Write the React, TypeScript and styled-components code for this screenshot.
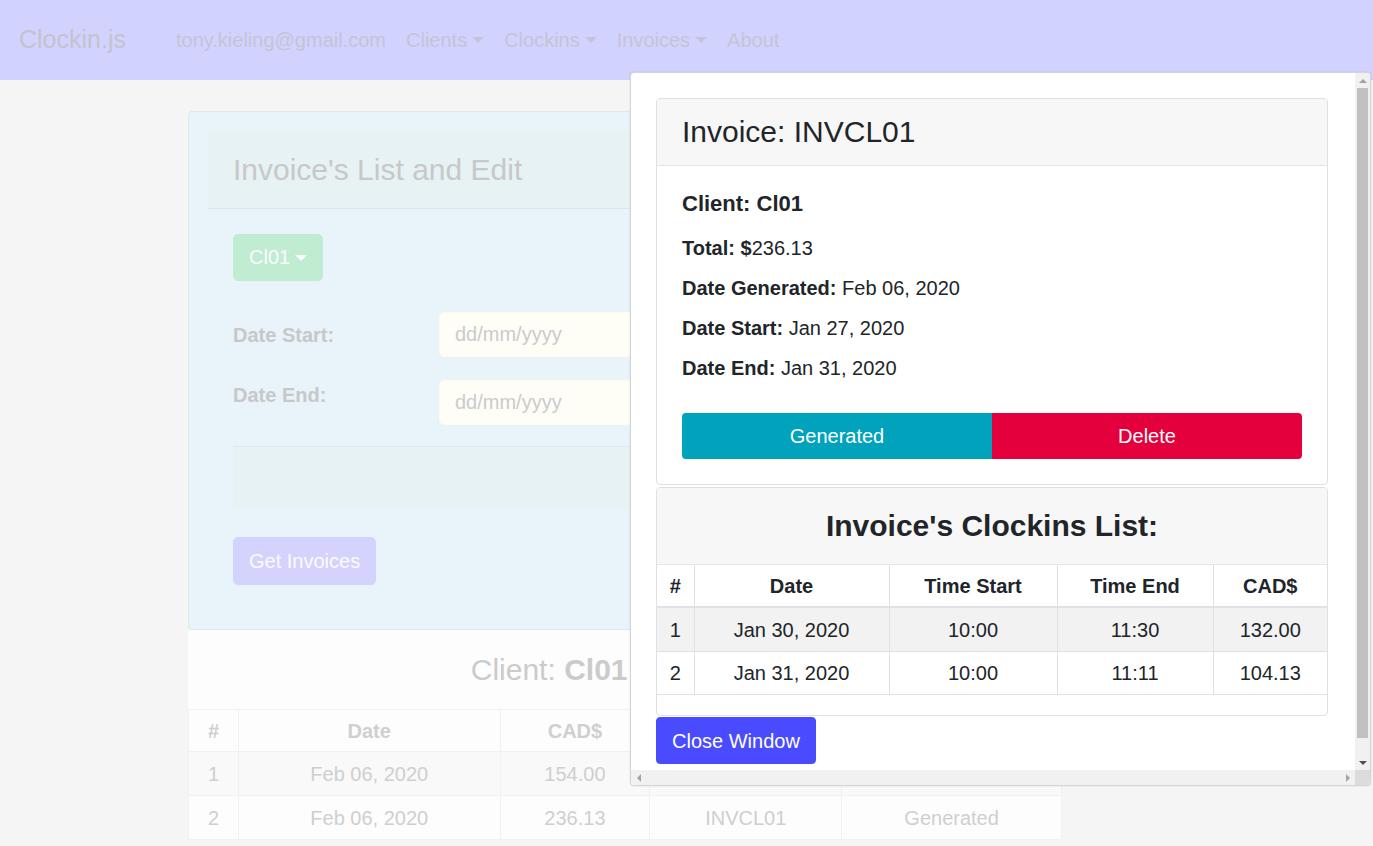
import React from "react";
import styled, { createGlobalStyle } from "styled-components";

const GlobalStyle = createGlobalStyle`
  * { box-sizing: border-box; }
  html, body { margin: 0; padding: 0; }
  body {
    background: #f5f5f5;
    font-family: "Liberation Sans", Arial, Helvetica, sans-serif;
    font-size: 20px;
    line-height: 1.5;
    color: #212529;
  }
`;

const Page = styled.div`
  position: relative;
  height: 846px;
  overflow: hidden;
`;

const Navbar = styled.nav`
  height: 80px;
  background: #d2d2fe;
  display: flex;
  align-items: center;
  padding: 0 19px;
`;

const Brand = styled.span`
  font-size: 25px;
  color: #c3c3cc;
  margin-right: 50px;
`;

const NavList = styled.div`
  display: flex;
  gap: 20px;
`;

const NavLink = styled.span`
  color: #c4c4d6;
  font-size: 20px;
  display: inline-flex;
  align-items: center;
`;

const Caret = styled.span<{ $color?: string }>`
  display: inline-block;
  margin-left: 5px;
  width: 0;
  height: 0;
  border-top: 6px solid ${(p) => p.$color || "currentColor"};
  border-left: 6px solid transparent;
  border-right: 6px solid transparent;
`;

const Main = styled.main`
  padding: 31px 0 0 188px;
`;

const Panel = styled.section`
  width: 874px;
  background: #e8f4f9;
  border: 1px solid #dde9ee;
  border-radius: 4px;
  padding: 19px 19px 19px;
`;

const PanelHeader = styled.div`
  background: #e7f2f5;
  border-bottom: 1px solid #dbe7eb;
  padding: 21px 25px 20px;
`;

const PanelTitle = styled.h3`
  margin: 0;
  font-size: 30px;
  line-height: 36px;
  font-weight: 400;
  color: #c8c8c8;
`;

const PanelBody = styled.div`
  padding: 25px 25px 25px;
`;

const FadedButton = styled.button<{ $bg: string; $h?: number }>`
  display: inline-flex;
  align-items: center;
  height: ${(p) => p.$h || 47}px;
  padding: 0 15px;
  background: ${(p) => p.$bg};
  border: 1px solid ${(p) => p.$bg};
  border-radius: 5px;
  color: #fbfbff;
  font-family: inherit;
  font-size: 20px;
`;

const FormGrid = styled.div`
  margin-top: 31px;
  display: grid;
  grid-template-columns: 206px 1fr;
  row-gap: 23px;
`;

const FormLabel = styled.label<{ $top: number }>`
  font-weight: 700;
  color: #c8c8c8;
  padding-top: ${(p) => p.$top}px;
  line-height: 30px;
`;

const DateInput = styled.input`
  height: 45px;
  width: 580px;
  background: #fefef6;
  border: 1px solid #fbfbf0;
  border-radius: 5px;
  padding: 0 15px;
  font-family: inherit;
  font-size: 20px;
  color: #cbcbcb;
  &::placeholder { color: #cbcbcb; }
`;

const InfoBox = styled.div`
  margin-top: 21px;
  height: 62px;
  background: #e6f2f4;
  border-top: 1px solid #dbe8eb;
`;

const ActionRow = styled.div`
  margin-top: 29px;
`;

const ClientHeading = styled.div`
  width: 874px;
  height: 79px;
  background: #fdfdfd;
  display: flex;
  align-items: center;
  justify-content: center;
  font-size: 30px;
  color: #cbcbcb;
  b { font-weight: 700; }
`;

const BgTable = styled.table`
  width: 874px;
  border-collapse: collapse;
  background: #fdfdfd;
  color: #cfcfcf;
  text-align: center;
  th, td {
    border: 1px solid #f1f1f1;
    padding: 6.5px 6px;
    line-height: 30px;
  }
  th { font-weight: 700; padding: 5.5px 6px; }
  tbody tr:nth-child(odd) { background: #f9f9f9; }
`;

/* ---------- Popup window with its scrollbars ---------- */

const Popup = styled.div`
  position: absolute;
  left: 630px;
  top: 72px;
  width: 741px;
  height: 714px;
  background: #fff;
  border: 1px solid #d4d4d4;
  border-radius: 4px;
  overflow: hidden;
  box-shadow: 0 0 2px rgba(0, 0, 0, 0.12);
  display: grid;
  grid-template-columns: 1fr 15px;
  grid-template-rows: 1fr 15px;
`;

const Viewport = styled.div`
  overflow: hidden;
  padding: 25px 27px 25px 25px;
`;

const VScroll = styled.div`
  background: #f1f1f1;
  display: flex;
  flex-direction: column;
  align-items: center;
`;

const HScroll = styled.div`
  background: #f1f1f1;
  display: flex;
  align-items: center;
  justify-content: space-between;
`;

const ScrollCorner = styled.div`
  background: #dcdcdc;
`;

const ArrowBox = styled.div`
  width: 15px;
  height: 15px;
  flex: none;
  display: flex;
  align-items: center;
  justify-content: center;
`;

const Arrow = styled.span<{ $dir: "up" | "down" | "left" | "right"; $dark?: boolean }>`
  width: 0;
  height: 0;
  ${(p) => {
    const c = p.$dark ? "#505050" : "#a3a3a3";
    switch (p.$dir) {
      case "up":
        return `border-left:4px solid transparent;border-right:4px solid transparent;border-bottom:4px solid ${c};`;
      case "down":
        return `border-left:4px solid transparent;border-right:4px solid transparent;border-top:4px solid ${c};`;
      case "left":
        return `border-top:4px solid transparent;border-bottom:4px solid transparent;border-right:4px solid ${c};`;
      default:
        return `border-top:4px solid transparent;border-bottom:4px solid transparent;border-left:4px solid ${c};`;
    }
  }}
`;

const Thumb = styled.div<{ $len: number }>`
  width: 11px;
  height: ${(p) => p.$len}px;
  background: #c1c1c1;
`;

const Spacer = styled.div`
  flex: 1;
`;

const Card = styled.div<{ $mt?: number }>`
  border: 1px solid #e0e0e0;
  border-radius: 4px;
  background: #fff;
  margin-top: ${(p) => p.$mt || 0}px;
  overflow: hidden;
`;

const CardHeader = styled.div<{ $center?: boolean; $py: number }>`
  background: #f7f7f7;
  border-bottom: 1px solid #e6e6e6;
  padding: ${(p) => p.$py}px 25px;
  text-align: ${(p) => (p.$center ? "center" : "left")};
`;

const CardTitle = styled.h3<{ $bold?: boolean }>`
  margin: 0;
  font-size: 30px;
  line-height: 36px;
  font-weight: ${(p) => (p.$bold ? 700 : 400)};
  color: #212529;
`;

const CardBody = styled.div`
  padding: 25px;
`;

const ClientName = styled.h5`
  margin: 0 0 16px;
  font-size: 22px;
  line-height: 26px;
  font-weight: 700;
`;

const Detail = styled.p`
  margin: 0 0 10px;
  line-height: 30px;
  font-size: 20px;
  b { font-weight: 700; }
`;

const ButtonGroup = styled.div`
  margin-top: 30px;
  display: flex;
  border-radius: 4px;
  overflow: hidden;
`;

const GroupButton = styled.button<{ $bg: string }>`
  flex: 1;
  height: 46px;
  border: none;
  background: ${(p) => p.$bg};
  color: #fff;
  font-family: inherit;
  font-size: 20px;
  line-height: 30px;
`;

const ClockTable = styled.table`
  width: 100%;
  border-collapse: collapse;
  margin-bottom: 20px;
  text-align: center;
  th, td {
    border: 1px solid #dee2e6;
    padding: 6.5px 6px;
    line-height: 30px;
    font-size: 20px;
  }
  tr > :first-child { border-left: none; }
  tr > :last-child { border-right: none; }
  thead th {
    font-weight: 700;
    border-top: none;
    border-bottom: 2px solid #dee2e6;
    padding: 5.5px 6px;
  }
  tbody tr:nth-child(odd) { background: #f2f2f2; }
  tbody tr:last-child td { padding: 6px; }
`;

const CloseButton = styled.button`
  margin-top: 1px;
  height: 47px;
  padding: 0 15px;
  background: #4a4aff;
  border: 1px solid #4a4aff;
  border-radius: 4px;
  color: #fff;
  font-family: inherit;
  font-size: 20px;
  line-height: 30px;
`;

const clockins = [
  { n: 1, date: "Jan 30, 2020", start: "10:00", end: "11:30", cad: "132.00" },
  { n: 2, date: "Jan 31, 2020", start: "10:00", end: "11:11", cad: "104.13" },
];

const invoices = [
  { n: 1, date: "Feb 06, 2020", cad: "154.00", code: "INVCL00", status: "Generated" },
  { n: 2, date: "Feb 06, 2020", cad: "236.13", code: "INVCL01", status: "Generated" },
];

export default function App() {
  return (
    <Page>
      <GlobalStyle />
      <Navbar>
        <Brand>Clockin.js</Brand>
        <NavList>
          <NavLink>tony.kieling@gmail.com</NavLink>
          <NavLink>Clients<Caret /></NavLink>
          <NavLink>Clockins<Caret /></NavLink>
          <NavLink>Invoices<Caret /></NavLink>
          <NavLink>About</NavLink>
        </NavList>
      </Navbar>

      <Main>
        <Panel>
          <PanelHeader>
            <PanelTitle>Invoice's List and Edit</PanelTitle>
          </PanelHeader>
          <PanelBody>
            <FadedButton $bg="#c0ecd2">
              Cl01<Caret $color="#fbfbff" />
            </FadedButton>
            <FormGrid>
              <FormLabel $top={8}>Date Start:</FormLabel>
              <DateInput placeholder="dd/mm/yyyy" readOnly />
              <FormLabel $top={0}>Date End:</FormLabel>
              <DateInput placeholder="dd/mm/yyyy" readOnly />
            </FormGrid>
            <InfoBox />
            <ActionRow>
              <FadedButton $bg="#d3d3fe" $h={48}>Get Invoices</FadedButton>
            </ActionRow>
          </PanelBody>
        </Panel>
        <ClientHeading>
          <span>
            Client: <b>Cl01</b>, 2 Invoices
          </span>
        </ClientHeading>
        <BgTable>
          <colgroup>
            <col style={{ width: 50 }} />
            <col style={{ width: 262 }} />
            <col style={{ width: 150 }} />
            <col style={{ width: 192 }} />
            <col style={{ width: 220 }} />
          </colgroup>
          <thead>
            <tr>
              <th>#</th>
              <th>Date</th>
              <th>CAD$</th>
              <th>Invoice</th>
              <th>Status</th>
            </tr>
          </thead>
          <tbody>
            {invoices.map((r) => (
              <tr key={r.n}>
                <td>{r.n}</td>
                <td>{r.date}</td>
                <td>{r.cad}</td>
                <td>{r.code}</td>
                <td>{r.status}</td>
              </tr>
            ))}
          </tbody>
        </BgTable>
      </Main>

      <Popup>
        <Viewport>
          <Card>
            <CardHeader $py={15}>
              <CardTitle>Invoice: INVCL01</CardTitle>
            </CardHeader>
            <CardBody>
              <ClientName>Client: Cl01</ClientName>
              <Detail><b>Total: $</b>236.13</Detail>
              <Detail><b>Date Generated:</b> Feb 06, 2020</Detail>
              <Detail><b>Date Start:</b> Jan 27, 2020</Detail>
              <Detail><b>Date End:</b> Jan 31, 2020</Detail>
              <ButtonGroup>
                <GroupButton $bg="#00a3bb">Generated</GroupButton>
                <GroupButton $bg="#e4003c">Delete</GroupButton>
              </ButtonGroup>
            </CardBody>
          </Card>
          <Card $mt={2}>
            <CardHeader $center $py={20}>
              <CardTitle $bold>Invoice's Clockins List:</CardTitle>
            </CardHeader>
            <ClockTable>
              <colgroup>
                <col style={{ width: 37 }} />
                <col style={{ width: 195 }} />
                <col style={{ width: 168 }} />
                <col style={{ width: 156 }} />
                <col style={{ width: 114 }} />
              </colgroup>
              <thead>
                <tr>
                  <th>#</th>
                  <th>Date</th>
                  <th>Time Start</th>
                  <th>Time End</th>
                  <th>CAD$</th>
                </tr>
              </thead>
              <tbody>
                {clockins.map((c) => (
                  <tr key={c.n}>
                    <td>{c.n}</td>
                    <td>{c.date}</td>
                    <td>{c.start}</td>
                    <td>{c.end}</td>
                    <td>{c.cad}</td>
                  </tr>
                ))}
              </tbody>
            </ClockTable>
          </Card>
          <CloseButton>Close Window</CloseButton>
        </Viewport>
        <VScroll>
          <ArrowBox><Arrow $dir="up" /></ArrowBox>
          <Thumb $len={650} />
          <Spacer />
          <ArrowBox><Arrow $dir="down" $dark /></ArrowBox>
        </VScroll>
        <HScroll>
          <ArrowBox><Arrow $dir="left" /></ArrowBox>
          <ArrowBox><Arrow $dir="right" /></ArrowBox>
        </HScroll>
        <ScrollCorner />
      </Popup>
    </Page>
  );
}
